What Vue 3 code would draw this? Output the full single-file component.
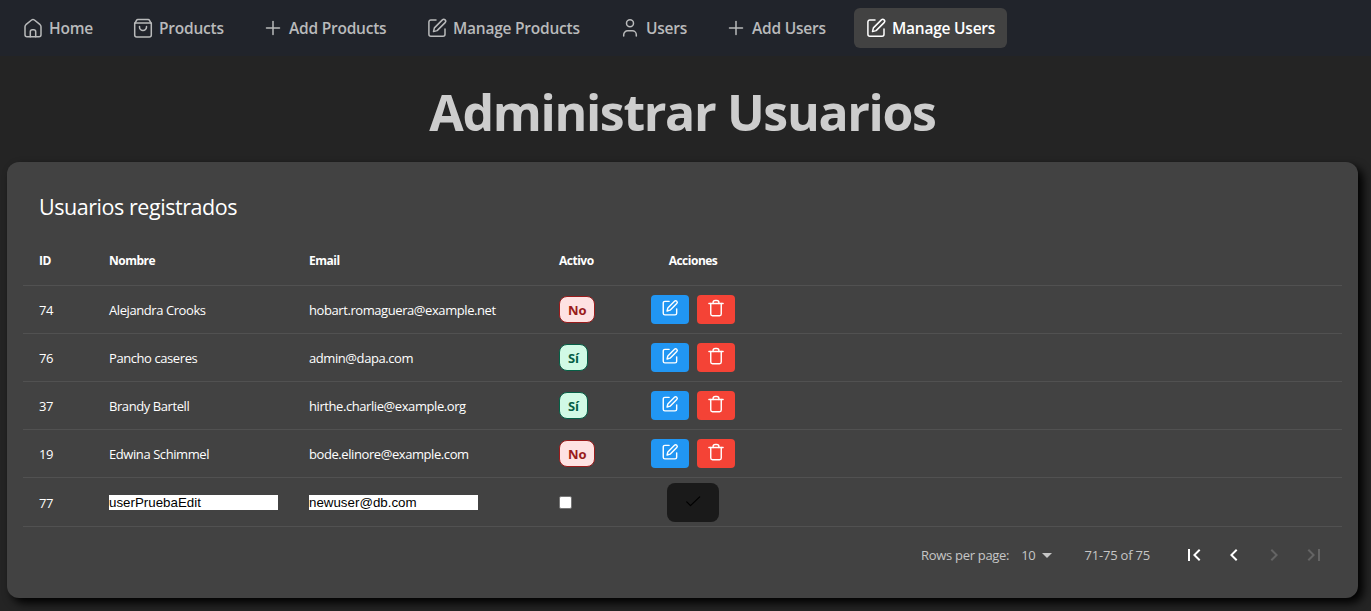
<script setup>
import { ref } from 'vue'

const icons = {
  home: ['M6 20.7a2 2 0 0 1-2-2v-8a2.6 2.6 0 0 1 .9-2L10.6 4a2.2 2.2 0 0 1 2.8 0l5.7 4.7a2.6 2.6 0 0 1 .9 2v8a2 2 0 0 1-2 2z', 'M9.3 20.7v-4.9a2 2 0 0 1 2-2h1.4a2 2 0 0 1 2 2v4.9'],
  bag: ['M4 7.2 5.5 4.3a1.6 1.6 0 0 1 1.4-.8h10.2a1.6 1.6 0 0 1 1.4.8L20 7.2', 'M4 7h16.3v12a2 2 0 0 1-2 2H5.7a2 2 0 0 1-2-2V7z', 'M8.5 10.5v.5a3.5 3.5 0 0 0 7 0v-.5'],
  plus: ['M12 5.5v13', 'M5.5 12h13'],
  edit: ['M11 4H5.9a2 2 0 0 0-2 2v12.2a2 2 0 0 0 2 2H18a2 2 0 0 0 2-2V13', 'M17.4 3.9a1.9 1.9 0 0 1 2.7 2.7l-8 8-3.6 1 .9-3.7z'],
  user: ['M12 3.8a3.5 3.5 0 1 0 0 7 3.5 3.5 0 0 0 0-7z', 'M5.7 20v-1.2a4 4 0 0 1 4-4h4.6a4 4 0 0 1 4 4V20'],
  trash: ['M3.5 6.5h17', 'M5.7 6.5v12.8a2 2 0 0 0 2 2h8.6a2 2 0 0 0 2-2V6.5', 'M8.5 6.5V5.6a2.6 2.6 0 0 1 2.6-2.6h1.8a2.6 2.6 0 0 1 2.6 2.6v.9'],
  check: ['M4.5 13l4.5 4.5L20 7']
}

const links = [
  { label: 'Home', icon: 'home' },
  { label: 'Products', icon: 'bag' },
  { label: 'Add Products', icon: 'plus' },
  { label: 'Manage Products', icon: 'edit' },
  { label: 'Users', icon: 'user' },
  { label: 'Add Users', icon: 'plus' },
  { label: 'Manage Users', icon: 'edit', active: true }
]

const users = [
  { id: 74, name: 'Alejandra Crooks', email: 'hobart.romaguera@example.net', active: false },
  { id: 76, name: 'Pancho caseres', email: 'admin@dapa.com', active: true },
  { id: 37, name: 'Brandy Bartell', email: 'hirthe.charlie@example.org', active: true },
  { id: 19, name: 'Edwina Schimmel', email: 'bode.elinore@example.com', active: false }
]

const draft = ref({ id: 77, name: 'userPruebaEdit', email: 'newuser@db.com', active: false })

const pager = [
  { label: 'First page', d: 'M18.41 16.59L13.82 12l4.59-4.59L17 6l-6 6 6 6zM6 6h2v12H6z' },
  { label: 'Previous page', d: 'M15.41 7.41L14 6l-6 6 6 6 1.41-1.41L10.83 12z' },
  { label: 'Next page', d: 'M10 6L8.59 7.41 13.17 12l-4.58 4.59L10 18l6-6z', disabled: true },
  { label: 'Last page', d: 'M5.59 7.41L10.18 12l-4.59 4.59L7 18l6-6-6-6zM16 6h2v12h-2z', disabled: true }
]
</script>

<template>
  <div class="page">
    <nav class="nav">
      <a v-for="link in links" :key="link.label" class="link" :class="{ current: link.active }">
        <svg class="icon" viewBox="0 0 24 24"><path v-for="d in icons[link.icon]" :key="d" :d="d" /></svg>
        <span>{{ link.label }}</span>
      </a>
    </nav>

    <h1 class="title">Administrar Usuarios</h1>

    <section class="card">
      <h2 class="subtitle">Usuarios registrados</h2>
      <div class="table">
        <div class="row head">
          <span>ID</span><span>Nombre</span><span>Email</span><span>Activo</span><span class="actions">Acciones</span>
        </div>
        <div v-for="user in users" :key="user.id" class="row">
          <span>{{ user.id }}</span>
          <span>{{ user.name }}</span>
          <span>{{ user.email }}</span>
          <span><b class="badge" :class="user.active ? 'yes' : 'no'">{{ user.active ? 'Sí' : 'No' }}</b></span>
          <span class="actions">
            <button class="btn blue" aria-label="Editar"><svg class="icon" viewBox="0 0 24 24"><path v-for="d in icons.edit" :key="d" :d="d" /></svg></button>
            <button class="btn red" aria-label="Eliminar"><svg class="icon" viewBox="0 0 24 24"><path v-for="d in icons.trash" :key="d" :d="d" /></svg></button>
          </span>
        </div>
        <div class="row editing">
          <span class="draft-id">{{ draft.id }}</span>
          <span><input v-model="draft.name" class="field" type="text"></span>
          <span><input v-model="draft.email" class="field" type="text"></span>
          <span><input v-model="draft.active" class="box" type="checkbox"></span>
          <span class="actions">
            <button class="save" aria-label="Guardar"><svg class="icon" viewBox="0 0 24 24"><path v-for="d in icons.check" :key="d" :d="d" /></svg></button>
          </span>
        </div>
      </div>
      <footer class="footer">
        <span>Rows per page:</span>
        <span class="count">10</span>
        <svg class="caret" viewBox="0 0 24 24"><path d="M7 10l5 5 5-5z" /></svg>
        <span class="range">71-75 of 75</span>
        <button v-for="p in pager" :key="p.label" class="page-btn" :disabled="p.disabled" :aria-label="p.label">
          <svg viewBox="0 0 24 24"><path :d="p.d" /></svg>
        </button>
      </footer>
    </section>
  </div>
</template>

<style>
html, body { margin: 0; background: #242424; overflow: hidden; }
</style>

<style scoped>
.page {
  box-sizing: border-box;
  height: 611px;
  overflow: hidden;
  background: #242424;
  font-family: "Open Sans", "Noto Sans", sans-serif;
  color: #fff;
}
.nav {
  box-sizing: border-box;
  height: 56px;
  padding: 8px 11px;
  background: #21242b;
  display: grid;
  grid-template-columns: 94px 114px 148px 177px 90px 124px 153px;
  column-gap: 16px;
}
.link {
  display: flex;
  align-items: center;
  gap: 4px;
  padding-left: 10px;
  border-radius: 6px;
  color: #b9babb;
  font-size: 15.5px;
  font-weight: 600;
  letter-spacing: -0.23px;
  white-space: nowrap;
}
.current { background: #424242; color: #fff; }
.icon {
  flex: none;
  width: 24px;
  height: 24px;
  fill: none;
  stroke: currentColor;
  stroke-width: 1.5;
  stroke-linecap: round;
  stroke-linejoin: round;
}
.title {
  margin: 0;
  height: 106px;
  padding-right: 6px;
  line-height: 113px;
  text-align: center;
  font-size: 50px;
  font-weight: 700;
  letter-spacing: -1.35px;
  color: #cdcdcd;
}
.card {
  box-sizing: border-box;
  width: 1351px;
  height: 436px;
  margin-left: 7px;
  padding: 24px 16px 0;
  border-radius: 12px;
  background: #424242;
  box-shadow: 5px 5px 10px #000;
}
.subtitle {
  margin: 0;
  height: 51px;
  padding-left: 16px;
  line-height: 41px;
  font-size: 21.5px;
  font-weight: 400;
  letter-spacing: -0.45px;
}
.row {
  box-sizing: border-box;
  height: 48px;
  padding-left: 16px;
  display: grid;
  grid-template-columns: 70px 200px 250px 92px 84px;
  align-items: center;
  border-bottom: 1px solid #515151;
  font-size: 13px;
  letter-spacing: -0.42px;
  white-space: nowrap;
}
.draft-id { padding-top: 2px; }
.head {
  height: 49px;
  padding-bottom: 1px;
  font-size: 12px;
  font-weight: 700;
  letter-spacing: -0.5px;
}
.editing { height: 49px; }
.actions { display: flex; justify-content: center; gap: 8px; }
.badge {
  display: inline-block;
  box-sizing: border-box;
  height: 27px;
  padding: 0 8px;
  line-height: 26px;
  border: 1px solid;
  border-radius: 8px;
  font-size: 13px;
  letter-spacing: -0.1px;
  vertical-align: middle;
}
.no { background: #fee2e2; color: #991b1b; }
.yes { background: #d1fae5; color: #065f46; }
.btn {
  width: 38px;
  height: 29px;
  padding: 0 0 3px;
  border: 0;
  border-radius: 4px;
  color: #fff;
  display: grid;
  place-items: center;
}
.btn .icon { width: 20px; height: 20px; stroke-width: 1.7; }
.blue { background: #2196f3; }
.red { background: #f44336; }
.field {
  display: block;
  box-sizing: border-box;
  width: 169px;
  height: 15px;
  padding: 0;
  border: 0;
  border-radius: 0;
  background: #fff;
  color: #000;
  font: 13.333px "Liberation Sans", sans-serif;
}
.box {
  appearance: none;
  display: block;
  box-sizing: border-box;
  width: 13px;
  height: 13px;
  margin: 0;
  border: 1px solid #767676;
  border-radius: 2px;
  background: #fff;
}
.save {
  width: 52px;
  height: 39px;
  padding: 0 0 3px;
  border: 0;
  border-radius: 8px;
  background: #1a1a1a;
  color: #000;
  display: grid;
  place-items: center;
}
.save .icon { width: 20px; height: 20px; }
.footer {
  height: 56px;
  padding-right: 8px;
  display: flex;
  align-items: center;
  justify-content: flex-end;
  font-size: 13px;
  letter-spacing: -0.3px;
  color: #c6c6c6;
  white-space: nowrap;
}
.count { margin-left: 12px; }
.caret { width: 24px; height: 24px; fill: #c6c6c6; }
.range { margin: 0 24px 0 25px; letter-spacing: -0.2px; }
.page-btn {
  width: 40px;
  height: 40px;
  padding: 8px;
  border: 0;
  background: none;
}
.page-btn svg { display: block; width: 24px; height: 24px; fill: #fff; }
.page-btn:disabled svg { fill: #646464; }
</style>
